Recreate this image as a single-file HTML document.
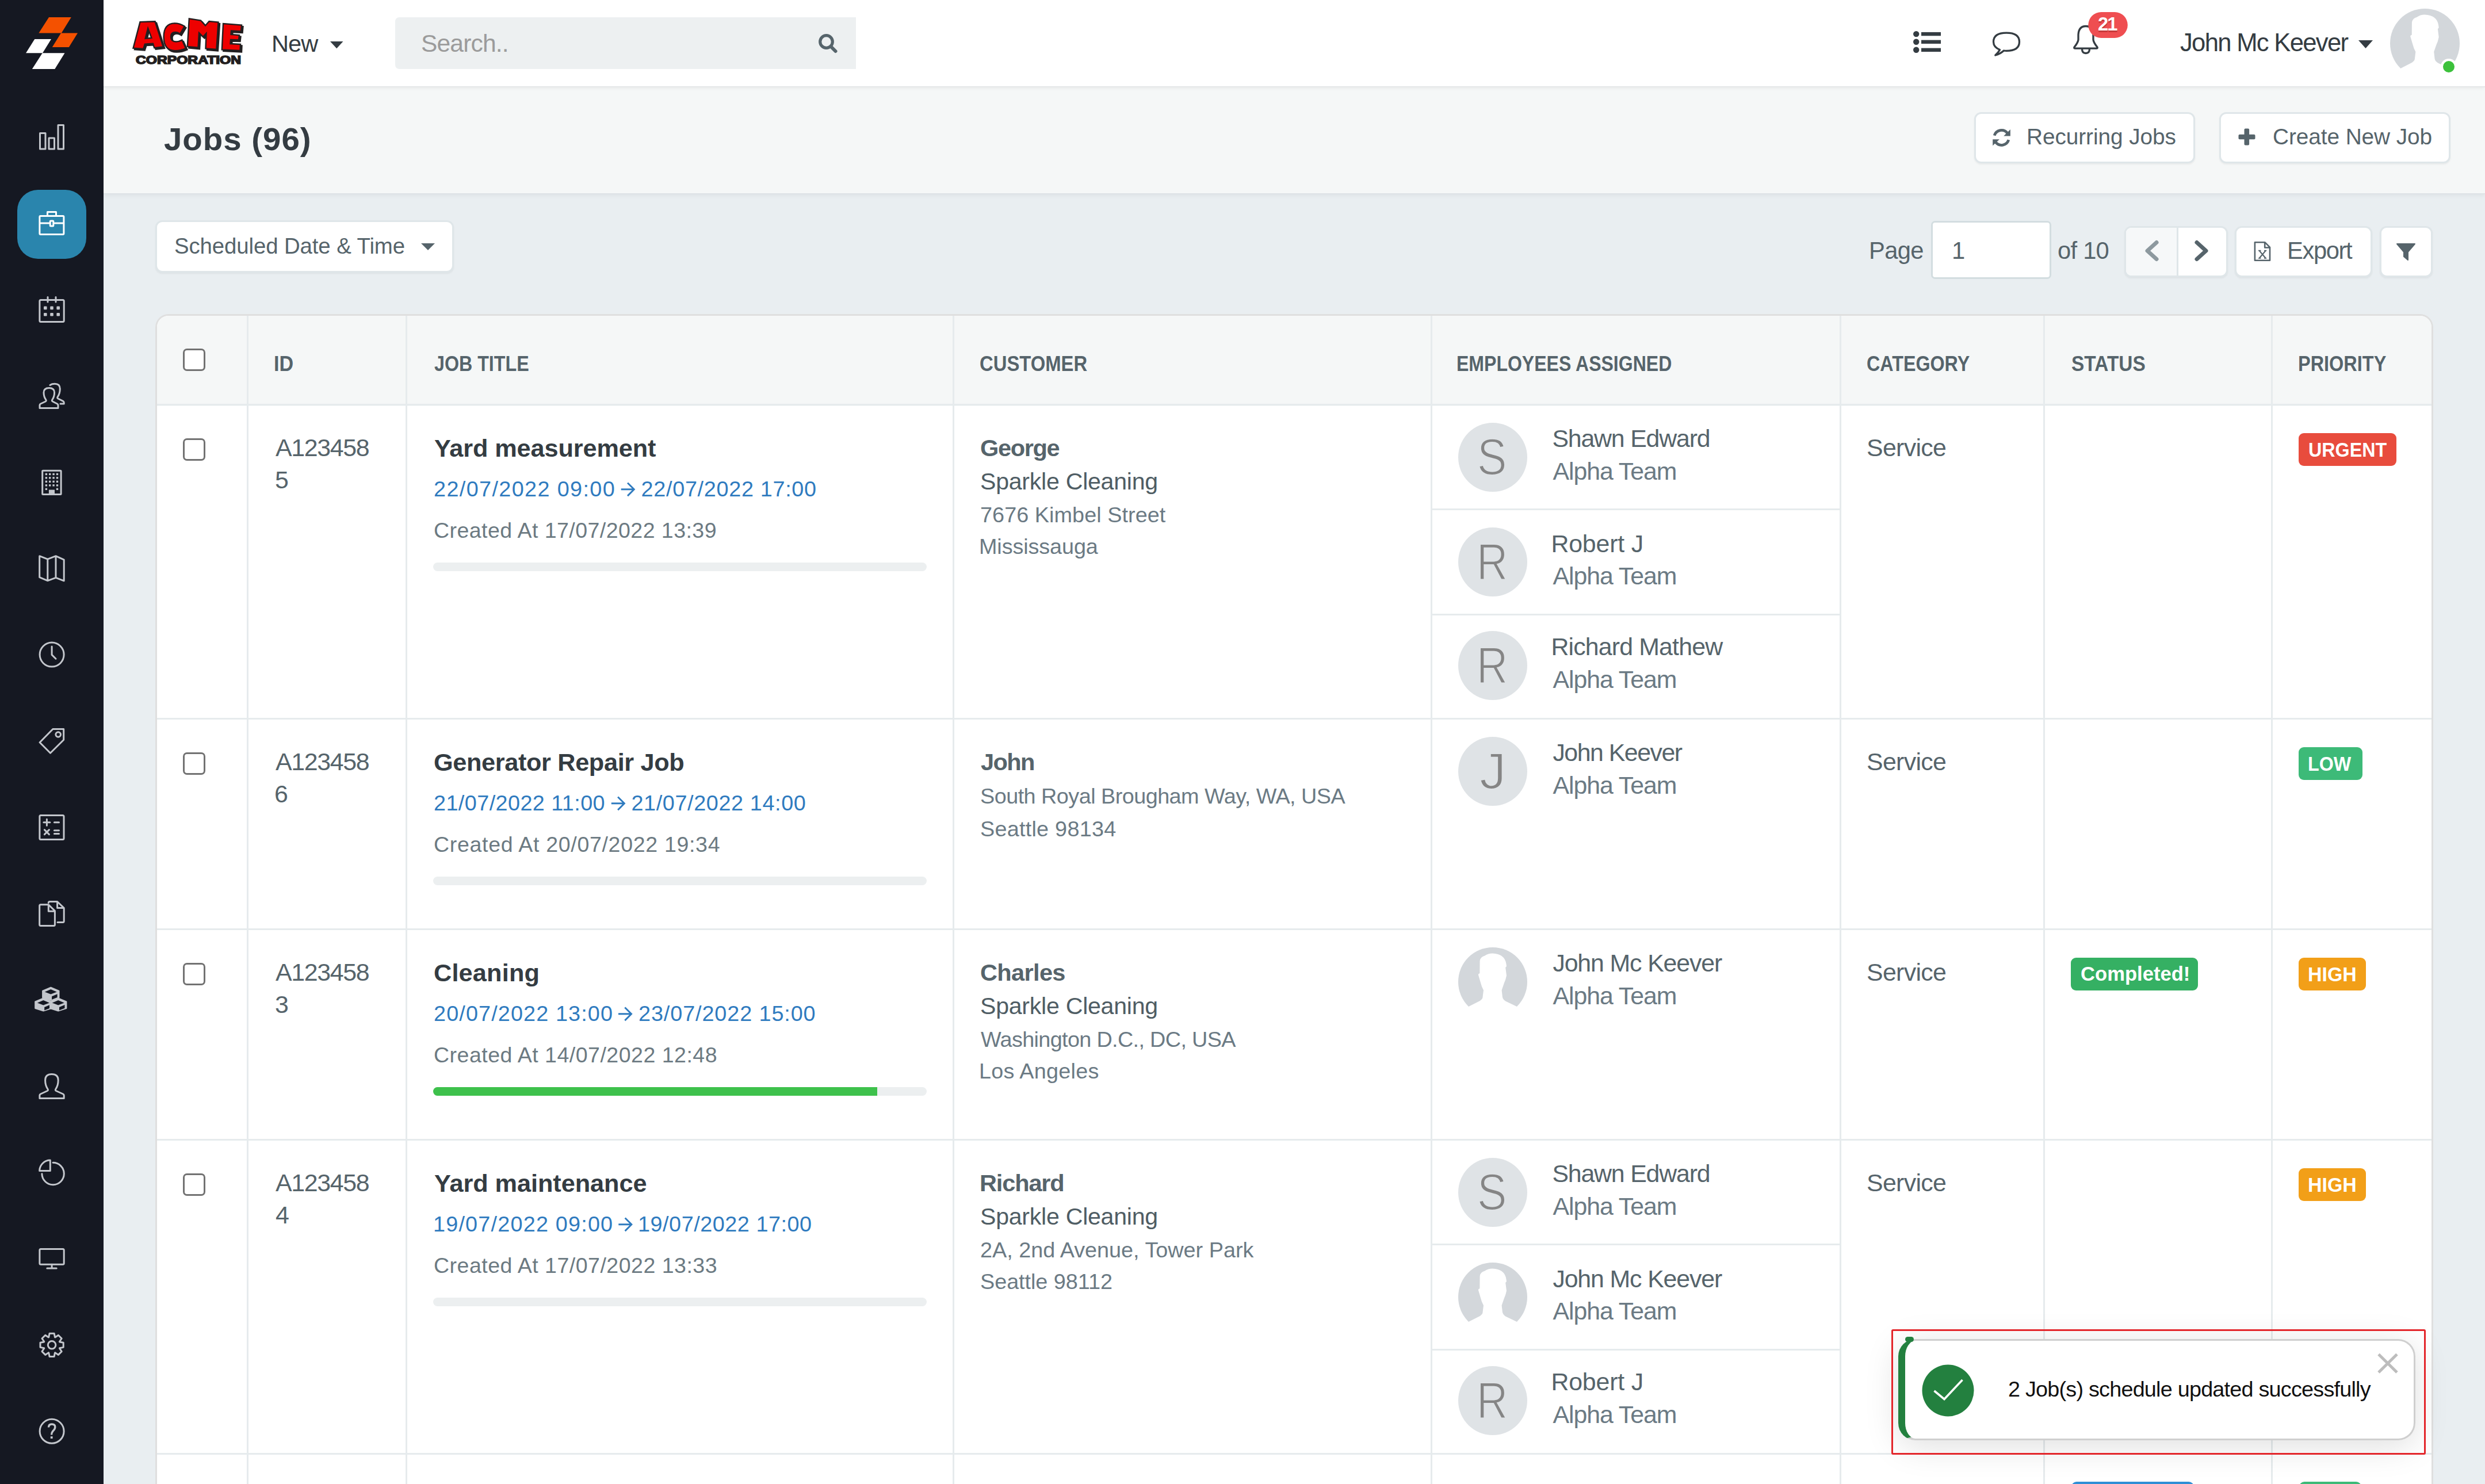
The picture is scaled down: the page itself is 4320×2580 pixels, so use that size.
<!DOCTYPE html>
<html><head><meta charset="utf-8">
<style>
html,body{margin:0;padding:0;}
body{width:4320px;height:2580px;overflow:hidden;position:relative;background:#e9eef1;font-family:"Liberation Sans",sans-serif;}
.a{position:absolute;}
.t{position:absolute;white-space:nowrap;z-index:3;font-family:"Liberation Sans",sans-serif;}
.sb{position:absolute;left:0;top:0;width:180px;height:2580px;background:#151822;}
.ico{position:absolute;left:66px;width:48px;height:48px;}
.hdr{position:absolute;left:180px;top:0;width:4140px;height:150px;background:#fff;box-shadow:0 1.5px 0 #e1e4e5,0 3px 7px rgba(0,0,0,.06);z-index:2;}
.band{position:absolute;left:180px;top:150px;width:4140px;height:186px;background:#f5f7f7;box-shadow:0 1.5px 0 #dce2e5,0 4px 8px rgba(0,0,0,.05);z-index:1;}
.btn{position:absolute;background:#fff;border:3px solid #dfe6e9;border-radius:12px;box-sizing:border-box;box-shadow:0 2px 3px rgba(0,0,0,.05);}
.cb{position:absolute;left:318px;width:39px;height:39px;box-sizing:border-box;border:3px solid #727272;border-radius:7px;background:#fff;}
.vl{position:absolute;width:3px;background:#e6ebed;}
.hl{position:absolute;height:3px;background:#e6ebed;}
.prog{position:absolute;left:753px;width:858px;height:15px;border-radius:8px;background:#eceff0;overflow:hidden;}
.av{position:absolute;left:2535px;width:120px;height:120px;border-radius:60px;background:#dfe3e6;}
.badge{position:absolute;height:57px;border-radius:9px;color:#fff;font-weight:700;}
</style></head>
<body>
<!-- SIDEBAR -->
<div class="sb">
  <svg class="a" style="left:0;top:0" width="180" height="150" viewBox="0 0 180 150">
    <polygon points="85,30 123.8,30 106.8,57.45 67.4,57.45" fill="#f45100"/>
    <polygon points="106,57.45 135,57.45 119.8,82 90.8,82" fill="#f45100"/>
    <polygon points="60.3,68 89,68 74,92.2 45,92.2" fill="#ffffff"/>
    <polygon points="73.7,92.2 112.5,92.2 95.3,120.1 55.9,120.1" fill="#ffffff"/>
  </svg>
  <div class="a" style="left:30px;top:330px;width:120px;height:120px;border-radius:36px;background:#2a85ad;"></div>
  <svg class="a" style="left:0;top:0" width="180" height="2580" viewBox="0 0 180 2580"><rect x="69.5" y="231.5" width="9.5" height="27.5" fill="none" stroke="#c3c6cc" stroke-width="3" stroke-linejoin="round" stroke-linecap="round"/><rect x="85" y="240" width="9.5" height="19" fill="none" stroke="#c3c6cc" stroke-width="3" stroke-linejoin="round" stroke-linecap="round"/><rect x="101" y="217.5" width="9.5" height="41.5" fill="none" stroke="#c3c6cc" stroke-width="3" stroke-linejoin="round" stroke-linecap="round"/><rect x="68.9" y="375.5" width="42" height="32" rx="1.5" fill="none" stroke="#ffffff" stroke-width="3" stroke-linejoin="round"/><path d="M82.5 375.5 V368.5 H97.5 V375.5" fill="none" stroke="#ffffff" stroke-width="3" stroke-linejoin="round"/><path d="M68.9 388 H87 M93 388 H110.9" fill="none" stroke="#ffffff" stroke-width="3" stroke-linejoin="round"/><rect x="87.2" y="384" width="5.6" height="9" rx="1" fill="none" stroke="#ffffff" stroke-width="3" stroke-linejoin="round"/><rect x="68.9" y="521.4" width="42.3" height="38.2" rx="2" fill="none" stroke="#c3c6cc" stroke-width="3" stroke-linejoin="round" stroke-linecap="round"/><path d="M83 516.5 V525 M97 516.5 V525" fill="none" stroke="#c3c6cc" stroke-width="3" stroke-linejoin="round" stroke-linecap="round"/><rect x="76.0" y="532.6" width="5.6" height="5.6" rx="1.2" fill="#c3c6cc"/><rect x="76.0" y="543.9" width="5.6" height="5.6" rx="1.2" fill="#c3c6cc"/><rect x="87.2" y="532.6" width="5.6" height="5.6" rx="1.2" fill="#c3c6cc"/><rect x="87.2" y="543.9" width="5.6" height="5.6" rx="1.2" fill="#c3c6cc"/><rect x="98.4" y="532.6" width="5.6" height="5.6" rx="1.2" fill="#c3c6cc"/><rect x="98.4" y="543.9" width="5.6" height="5.6" rx="1.2" fill="#c3c6cc"/><path d="M69 709.4 H101 V704.5 Q101 702.8 99.4 702 L91.5 698 Q89.6 697 90.8 695 Q94.6 689.5 94.6 682.5 Q94.6 674.5 85.3 674.5 Q76 674.5 76 682.5 Q76 689.5 79.8 695 Q81 697 79.1 698 L70.6 702 Q69 702.8 69 704.5 Z" fill="none" stroke="#c3c6cc" stroke-width="3" stroke-linejoin="round" stroke-linecap="round"/><path d="M87 669.5 Q90 667.3 95.2 667.3 Q104.3 667.3 104.3 676 Q104.3 684 100.2 690 Q99 692 101 693 L109.6 697.3 Q111.2 698.2 111.2 700 V702 H105" fill="none" stroke="#c3c6cc" stroke-width="3" stroke-linejoin="round" stroke-linecap="round"/><rect x="73.7" y="818.3" width="32.4" height="41.1" rx="1" fill="none" stroke="#c3c6cc" stroke-width="3" stroke-linejoin="round" stroke-linecap="round"/><rect x="78.7" y="822.7" width="3.4" height="3.4" fill="#c3c6cc"/><rect x="78.7" y="829.1" width="3.4" height="3.4" fill="#c3c6cc"/><rect x="78.7" y="835.6" width="3.4" height="3.4" fill="#c3c6cc"/><rect x="78.7" y="842.1" width="3.4" height="3.4" fill="#c3c6cc"/><rect x="85.0" y="822.7" width="3.4" height="3.4" fill="#c3c6cc"/><rect x="85.0" y="829.1" width="3.4" height="3.4" fill="#c3c6cc"/><rect x="85.0" y="835.6" width="3.4" height="3.4" fill="#c3c6cc"/><rect x="85.0" y="842.1" width="3.4" height="3.4" fill="#c3c6cc"/><rect x="91.4" y="822.7" width="3.4" height="3.4" fill="#c3c6cc"/><rect x="91.4" y="829.1" width="3.4" height="3.4" fill="#c3c6cc"/><rect x="91.4" y="835.6" width="3.4" height="3.4" fill="#c3c6cc"/><rect x="91.4" y="842.1" width="3.4" height="3.4" fill="#c3c6cc"/><rect x="97.8" y="822.7" width="3.4" height="3.4" fill="#c3c6cc"/><rect x="97.8" y="829.1" width="3.4" height="3.4" fill="#c3c6cc"/><rect x="97.8" y="835.6" width="3.4" height="3.4" fill="#c3c6cc"/><rect x="97.8" y="842.1" width="3.4" height="3.4" fill="#c3c6cc"/><rect x="78.7" y="848.6" width="3.4" height="3.4" fill="#c3c6cc"/><rect x="97.8" y="848.6" width="3.4" height="3.4" fill="#c3c6cc"/><rect x="84.9" y="851.5" width="10.1" height="8.5" fill="#c3c6cc"/><path d="M68.7 966.7 L82.8 972.2 L97 966.7 L111.2 973.2 V1009.8 L97 1004.3 L82.8 1009.6 L68.7 1003.7 Z M82.8 972.2 V1009.6 M97 966.7 V1004.3" fill="none" stroke="#c3c6cc" stroke-width="3" stroke-linejoin="round" stroke-linecap="round"/><circle cx="90.1" cy="1138.1" r="21" fill="none" stroke="#c3c6cc" stroke-width="3" stroke-linejoin="round" stroke-linecap="round"/><path d="M90.1 1124 V1138.4 L97 1145.2" fill="none" stroke="#c3c6cc" stroke-width="3" stroke-linejoin="round" stroke-linecap="round"/><path d="M69.1 1290.8 L91.9 1267.5 H110.7 V1286.3 L87.5 1309.2 Z" fill="none" stroke="#c3c6cc" stroke-width="3" stroke-linejoin="round" stroke-linecap="round"/><circle cx="101.2" cy="1277" r="4.3" fill="none" stroke="#c3c6cc" stroke-width="3" stroke-linejoin="round" stroke-linecap="round"/><rect x="68.9" y="1417.5" width="42.1" height="41.9" rx="2" fill="none" stroke="#c3c6cc" stroke-width="3" stroke-linejoin="round" stroke-linecap="round"/><path d="M75.9 1429.8 H86.9 M81.4 1424.3 V1435.3 M94.4 1429.8 H102.5 M77.4 1442.6 L85.4 1450.6 M85.4 1442.6 L77.4 1450.6 M94.4 1443.8 H102.5 M94.4 1449.4 H102.5" fill="none" stroke="#c3c6cc" stroke-width="3" stroke-linejoin="round" stroke-linecap="round"/><path d="M84.3 1572.8 H70.7 Q68.7 1572.8 68.7 1574.8 V1607.4 Q68.7 1609.4 70.7 1609.4 H93.4 Q95.4 1609.4 95.4 1607.4 V1583.5 L84.3 1572.8 V1584.3 H95.4" fill="none" stroke="#c3c6cc" stroke-width="3" stroke-linejoin="round" stroke-linecap="round"/><path d="M84.3 1569.5 Q84.3 1567.5 86.3 1567.5 H99.6 L111.2 1578.6 V1601.5 Q111.2 1603.5 109.2 1603.5 H100 M99.6 1567.5 V1578.6 H111.2" fill="none" stroke="#c3c6cc" stroke-width="3" stroke-linejoin="round" stroke-linecap="round"/><polygon points="88.3,1716.7 102.5,1722.6 102.5,1734.3 88.3,1738.7 74.1,1734.3 74.1,1722.6" fill="#c3c6cc" stroke="#c3c6cc" stroke-width="2" stroke-linejoin="round"/><polygon points="88.3,1720.1 98.8,1724.6 88.3,1728.6 77.8,1724.6" fill="#141722"/><polygon points="90.1,1732.3 99.6,1728.2 99.6,1733.9 90.1,1737.7" fill="#141722"/><polygon points="75.4,1735.5 89.6,1741.4 89.6,1753.1 75.4,1757.5 61.2,1753.1 61.2,1741.4" fill="#c3c6cc" stroke="#c3c6cc" stroke-width="2" stroke-linejoin="round"/><polygon points="75.4,1738.9 85.9,1743.4 75.4,1747.4 64.9,1743.4" fill="#141722"/><polygon points="77.2,1751.1 86.7,1747.0 86.7,1752.7 77.2,1756.5" fill="#141722"/><polygon points="101.2,1735.5 115.4,1741.4 115.4,1753.1 101.2,1757.5 87.0,1753.1 87.0,1741.4" fill="#c3c6cc" stroke="#c3c6cc" stroke-width="2" stroke-linejoin="round"/><polygon points="101.2,1738.9 111.7,1743.4 101.2,1747.4 90.7,1743.4" fill="#141722"/><polygon points="103.0,1751.1 112.5,1747.0 112.5,1752.7 103.0,1756.5" fill="#141722"/><path d="M68.9 1909.4 H111.2 V1904.5 Q111.2 1902.9 109.6 1902 L97.5 1896.5 Q95.6 1895.5 96.8 1893.5 Q101.2 1887 101.2 1878 Q101.2 1867.5 89.9 1867.5 Q78.6 1867.5 78.6 1878 Q78.6 1887 83 1893.5 Q84.2 1895.5 82.3 1896.5 L70.5 1902 Q68.9 1902.9 68.9 1904.5 Z" fill="none" stroke="#c3c6cc" stroke-width="3" stroke-linejoin="round" stroke-linecap="round"/><path d="M92 2021.3 A19.2 19.2 0 1 1 72.9 2040.8" fill="none" stroke="#c3c6cc" stroke-width="3" stroke-linejoin="round" stroke-linecap="round"/><path d="M87.3 2017.1 V2035.5 H68.7 A18.6 18.6 0 0 1 87.3 2017.1 Z" fill="none" stroke="#c3c6cc" stroke-width="3" stroke-linejoin="round" stroke-linecap="round"/><rect x="68.9" y="2171.5" width="42.3" height="26.7" rx="2" fill="none" stroke="#c3c6cc" stroke-width="3" stroke-linejoin="round" stroke-linecap="round"/><path d="M90.1 2198.2 V2205.1 M81.8 2205.1 H98.2" fill="none" stroke="#c3c6cc" stroke-width="3" stroke-linejoin="round" stroke-linecap="round"/><polygon points="86.03,2318.21 94.17,2318.21 95.48,2324.83 95.82,2324.98 101.43,2321.21 107.19,2326.97 103.42,2332.58 103.57,2332.92 110.19,2334.23 110.19,2342.37 103.57,2343.68 103.42,2344.02 107.19,2349.63 101.43,2355.39 95.82,2351.62 95.48,2351.77 94.17,2358.39 86.03,2358.39 84.72,2351.77 84.38,2351.62 78.77,2355.39 73.01,2349.63 76.78,2344.02 76.63,2343.68 70.01,2342.37 70.01,2334.23 76.63,2332.92 76.78,2332.58 73.01,2326.97 78.77,2321.21 84.38,2324.98 84.72,2324.83" fill="none" stroke="#c3c6cc" stroke-width="3" stroke-linejoin="round" stroke-linecap="round"/><circle cx="90.1" cy="2338.3" r="6.8" fill="none" stroke="#c3c6cc" stroke-width="3" stroke-linejoin="round" stroke-linecap="round"/><circle cx="90.1" cy="2488.3" r="21" fill="none" stroke="#c3c6cc" stroke-width="3" stroke-linejoin="round" stroke-linecap="round"/><path d="M84.5 2481.5 Q84.5 2476 90.1 2476 Q95.8 2476 95.8 2481 Q95.8 2484.5 92 2488 Q89.6 2490.5 89.6 2494.5" fill="none" stroke="#c3c6cc" stroke-width="3.4"/><rect x="87.8" y="2497.2" width="3.8" height="3.8" fill="#c3c6cc"/></svg>
</div>
<!-- HEADER -->
<div class="hdr"></div>
<div class="band"></div>
<svg class="a" style="left:0;top:0;z-index:3" width="1200" height="2580" viewBox="0 0 1200 2580"><path d="M1079.7 850.8 H1102.7 M1091.0 839.5 L1102.3 850.8 L1091.0 862.1" fill="none" stroke="#2f7bbf" stroke-width="2.9"/><path d="M1062.8 1396.8 H1085.8 M1074.1 1385.5 L1085.4 1396.8 L1074.1 1408.1" fill="none" stroke="#2f7bbf" stroke-width="2.9"/><path d="M1075.0 1762.8 H1098.0 M1086.3 1751.5 L1097.6 1762.8 L1086.3 1774.1" fill="none" stroke="#2f7bbf" stroke-width="2.9"/><path d="M1075.3 2128.8 H1098.3 M1086.6 2117.5 L1097.9 2128.8 L1086.6 2140.1" fill="none" stroke="#2f7bbf" stroke-width="2.9"/></svg><svg class="a" style="left:0;top:0;z-index:3" width="460" height="150" viewBox="0 0 460 150"><g transform="translate(2.5,2.5)" fill="#231f20" stroke="#231f20" stroke-width="2.4" stroke-linejoin="miter"><path fill-rule="evenodd" d="M231.5,83.7 L243.5,38.1 L269.6,37.3 L283.7,81.5 L268.2,83.3 L266,75.8 L251.9,76.6 L249.2,85 Z M257.2,49.2 L263.4,66 L252.7,66.9 Z"/><path d="M320.9 45.7 Q312 40.4 303.5 40.4 Q284.6 41 284.6 64 Q284.6 88.1 304.5 88.1 Q314 88.1 323 84 L316.5 69.6 Q311 72.5 306 72.5 Q297 72.5 297 64 Q297 56 305 56 Q309 56 313 59 Z"/><polygon points="325.8,81 328.8,32.4 349,35.5 357,44.5 363.5,37 379.5,38.6 376.4,86 357.5,84.5 358.5,58 353,64 346,57 344.5,82.8"/><polygon points="385.8,86.4 388,41 420,43.5 419,54.5 402,53.5 401.5,60 416,61 415,69.5 401,69 400.5,76 418,77 417.5,88"/></g><g transform="translate(0.0,0.0)" fill="#ee0000" stroke="#231f20" stroke-width="2.4" stroke-linejoin="miter"><path fill-rule="evenodd" d="M231.5,83.7 L243.5,38.1 L269.6,37.3 L283.7,81.5 L268.2,83.3 L266,75.8 L251.9,76.6 L249.2,85 Z M257.2,49.2 L263.4,66 L252.7,66.9 Z"/><path d="M320.9 45.7 Q312 40.4 303.5 40.4 Q284.6 41 284.6 64 Q284.6 88.1 304.5 88.1 Q314 88.1 323 84 L316.5 69.6 Q311 72.5 306 72.5 Q297 72.5 297 64 Q297 56 305 56 Q309 56 313 59 Z"/><polygon points="325.8,81 328.8,32.4 349,35.5 357,44.5 363.5,37 379.5,38.6 376.4,86 357.5,84.5 358.5,58 353,64 346,57 344.5,82.8"/><polygon points="385.8,86.4 388,41 420,43.5 419,54.5 402,53.5 401.5,60 416,61 415,69.5 401,69 400.5,76 418,77 417.5,88"/></g><text x="236" y="111" font-family="Liberation Sans" font-weight="700" font-size="19.5" fill="#231f20" stroke="#231f20" stroke-width="1.6" textLength="183" lengthAdjust="spacingAndGlyphs">CORPORATION</text></svg><svg class="a" style="left:0;top:0;z-index:3" width="4320" height="150" viewBox="0 0 4320 150"><polygon points="574,72 596.5,72 585.25,84.2" fill="#343c42"/><path d="M687 38 Q687 30 695 30 H1488 V120 H695 Q687 120 687 112 Z" fill="#edf0f1"/><circle cx="1436.5" cy="72.5" r="10.8" fill="none" stroke="#56646b" stroke-width="5.2"/><path d="M1445 81.5 L1452.5 89" stroke="#56646b" stroke-width="6" stroke-linecap="round"/><circle cx="3331.2" cy="59.1" r="5.2" fill="#343c42"/><circle cx="3331.2" cy="72.8" r="5.2" fill="#343c42"/><circle cx="3331.2" cy="86.8" r="5.2" fill="#343c42"/><rect x="3340" y="55.9" width="34" height="6.4" fill="#343c42"/><rect x="3340" y="69.6" width="34" height="6.4" fill="#343c42"/><rect x="3340" y="83.6" width="34" height="6.4" fill="#343c42"/><path d="M3476.5 86.5 Q3465.5 82 3465.5 72.8 Q3465.5 57.2 3488 57.2 Q3510.5 57.2 3510.5 72.8 Q3510.5 88.4 3488 88.4 Q3485 88.4 3483.5 88 Q3477 94 3468.8 96 Q3474 91.5 3476.5 86.5 Z" fill="none" stroke="#343c42" stroke-width="3.3" stroke-linejoin="round"/><path d="M3626 45.5 Q3614 45.5 3613 60 V69 Q3612.5 74 3606 82 Q3605 84.2 3607.5 84.2 H3644.5 Q3647 84.2 3646 82 Q3639.5 74 3639 69 V60 Q3638 45.5 3626 45.5 Z" fill="none" stroke="#343c42" stroke-width="3.3" stroke-linejoin="round"/><path d="M3619.5 85 Q3619.5 92.5 3626 92.5 Q3632.5 92.5 3632.5 85" fill="none" stroke="#343c42" stroke-width="3.3"/><rect x="3630.3" y="21" width="68.5" height="45" rx="22.5" fill="#ef4e51"/><polygon points="4100,70 4125,70 4112.5,84" fill="#343c42"/></svg><svg class="a" style="left:4155.0px;top:15.0px;z-index:3" width="121" height="121" viewBox="0 0 120 120"><circle cx="60" cy="60" r="60" fill="#d3d7db"/><path d="M18.5,102.8 L37.8,92.9 Q42.5,89.5 42.5,86.8 L44,74.5 Q40.5,68 39.2,62.2 L35,48.1 Q34.6,45.5 37.4,45.3 L37.6,24 Q38,17 46.3,14.6 Q52,10.4 59.5,10.4 Q81,11 83.5,29 L84,33 L82.2,35 L84,49 Q82.5,57 79.8,62.2 L75.6,74.5 L77,86.8 Q78,91 82.2,93.4 L101.5,102.8 L124,124 L-4,124 Z" fill="#ffffff"/></svg><div class="a" style="left:4243px;top:102px;width:28px;height:28px;border-radius:14px;background:#3cc13b;border:4px solid #fff;box-sizing:border-box;z-index:4;"></div><div class="btn" style="left:3432px;top:195px;width:384px;height:89px;z-index:3;"></div><div class="btn" style="left:3858px;top:195px;width:402px;height:89px;z-index:3;"></div><svg class="a" style="left:3455px;top:215px;z-index:4" width="50" height="50" viewBox="3455 215 50 50"><path d="M3467.16 235.63 A12.9 12.9 0 0 1 3489.67 231.46" fill="none" stroke="#56646b" stroke-width="4.8"/><polygon points="3494.9,224.9 3494.9,236.6 3483.2,236.6" fill="#56646b"/><path d="M3491.84 243.17 A12.9 12.9 0 0 1 3469.33 247.34" fill="none" stroke="#56646b" stroke-width="4.8"/><polygon points="3464.2,242.2 3464.2,253.2 3475.9,242.2" fill="#56646b"/></svg><svg class="a" style="left:3890px;top:222px;z-index:4" width="32" height="32" viewBox="0 0 32 32"><rect x="11.5" y="1.5" width="8.6" height="29" rx="2" fill="#56646b"/><rect x="1.5" y="11.7" width="29" height="8.6" rx="2" fill="#56646b"/></svg><div class="btn" style="left:270px;top:383px;width:519px;height:91px;"></div><svg class="a" style="left:720px;top:415px" width="50" height="30" viewBox="720 415 50 30"><polygon points="732,423 756,423 744,435" fill="#56646b"/></svg><div class="a" style="left:3357px;top:384px;width:209px;height:101px;box-sizing:border-box;border:3px solid #d3dde0;border-radius:7px;background:#fff;"></div><div class="btn" style="left:3693px;top:393px;width:180px;height:89px;overflow:hidden;"><div class="a" style="left:0;top:0;width:91px;height:89px;background:#f6f8f9;"></div><div class="a" style="left:88px;top:0;width:3px;height:89px;background:#dfe6e9;"></div></div><div class="btn" style="left:3885px;top:393px;width:239px;height:89px;"></div><div class="btn" style="left:4137px;top:393px;width:92px;height:89px;"></div><svg class="a" style="left:3700px;top:400px" width="540" height="80" viewBox="3700 400 540 80"><path d="M3749 421.5 L3733 436 L3749 450.5" fill="none" stroke="#8d999f" stroke-width="7" stroke-linecap="round" stroke-linejoin="round"/><path d="M3819 421.5 L3835 436 L3819 450.5" fill="none" stroke="#56646b" stroke-width="7" stroke-linecap="round" stroke-linejoin="round"/><path d="M3919.9 421.3 H3937.5 L3946 429.8 V452.7 H3919.9 Z M3937.2 421.3 V430.5 H3946" fill="none" stroke="#56646b" stroke-width="2.6" stroke-linejoin="round"/><path d="M3927.5 435.6 L3938.8 449 M3938.8 435.6 L3927.5 449" stroke="#56646b" stroke-width="2.2"/><path d="M3926 435.6 H3930.5 M3936 435.6 H3940.3 M3926 449 H3930.5 M3936 449 H3940.3" stroke="#56646b" stroke-width="1.6"/><path d="M4167 424 H4198 L4186 438 V452 L4179 446 V438 Z" fill="#56646b" stroke="#56646b" stroke-width="2" stroke-linejoin="round"/></svg><div class="a" style="left:270px;top:546px;width:3960px;height:2100px;background:#fff;border:3px solid #dfdfdf;border-radius:23px;box-sizing:border-box;overflow:hidden;"><div class="a" style="left:0;top:0;width:3960px;height:157px;background:#f5f7f7;"></div></div><div class="vl" style="left:428.5px;top:549px;height:2040px;"></div><div class="vl" style="left:704.5px;top:549px;height:2040px;"></div><div class="vl" style="left:1655.5px;top:549px;height:2040px;"></div><div class="vl" style="left:2486.5px;top:549px;height:2040px;"></div><div class="vl" style="left:3197.5px;top:549px;height:2040px;"></div><div class="vl" style="left:3551.5px;top:549px;height:2040px;"></div><div class="vl" style="left:3947.5px;top:549px;height:2040px;"></div><div class="hl" style="left:273px;top:701.5px;width:3954px;"></div><div class="hl" style="left:273px;top:1247.5px;width:3954px;"></div><div class="hl" style="left:273px;top:1613.5px;width:3954px;"></div><div class="hl" style="left:273px;top:1979.5px;width:3954px;"></div><div class="hl" style="left:273px;top:2525.5px;width:3954px;"></div><div class="hl" style="left:2489px;top:884.2px;width:709px;"></div><div class="hl" style="left:2489px;top:1067.2px;width:709px;"></div><div class="hl" style="left:2489px;top:2162.2px;width:709px;"></div><div class="hl" style="left:2489px;top:2345.2px;width:709px;"></div><div class="cb" style="top:606px;"></div><div class="cb" style="top:762px;"></div><div class="prog" style="top:978px;"></div><div class="av" style="top:735.2px;"></div><div class="av" style="top:917.4px;"></div><div class="av" style="top:1097.2px;"></div><div class="badge" style="left:3996px;top:753px;width:170px;background:#e84c3d;"></div><div class="cb" style="top:1308px;"></div><div class="prog" style="top:1524px;"></div><div class="av" style="top:1281.2px;"></div><div class="badge" style="left:3996px;top:1299px;width:111px;background:#3dba78;"></div><div class="cb" style="top:1674px;"></div><div class="prog" style="top:1890px;"><div class="a" style="left:0;top:0;height:15px;width:772px;background:#3ec14c;"></div></div><svg class="a" style="left:2535.0px;top:1647.2px;z-index:3" width="120" height="120" viewBox="0 0 120 120"><circle cx="60" cy="60" r="60" fill="#d3d7db"/><path d="M18.5,102.8 L37.8,92.9 Q42.5,89.5 42.5,86.8 L44,74.5 Q40.5,68 39.2,62.2 L35,48.1 Q34.6,45.5 37.4,45.3 L37.6,24 Q38,17 46.3,14.6 Q52,10.4 59.5,10.4 Q81,11 83.5,29 L84,33 L82.2,35 L84,49 Q82.5,57 79.8,62.2 L75.6,74.5 L77,86.8 Q78,91 82.2,93.4 L101.5,102.8 L124,124 L-4,124 Z" fill="#ffffff"/></svg><div class="badge" style="left:3600px;top:1665px;width:221px;background:#35b063;"></div><div class="badge" style="left:3996px;top:1665px;width:117px;background:#f29f18;"></div><div class="cb" style="top:2040px;"></div><div class="prog" style="top:2256px;"></div><div class="av" style="top:2013.2px;"></div><svg class="a" style="left:2535.0px;top:2195.4px;z-index:3" width="120" height="120" viewBox="0 0 120 120"><circle cx="60" cy="60" r="60" fill="#d3d7db"/><path d="M18.5,102.8 L37.8,92.9 Q42.5,89.5 42.5,86.8 L44,74.5 Q40.5,68 39.2,62.2 L35,48.1 Q34.6,45.5 37.4,45.3 L37.6,24 Q38,17 46.3,14.6 Q52,10.4 59.5,10.4 Q81,11 83.5,29 L84,33 L82.2,35 L84,49 Q82.5,57 79.8,62.2 L75.6,74.5 L77,86.8 Q78,91 82.2,93.4 L101.5,102.8 L124,124 L-4,124 Z" fill="#ffffff"/></svg><div class="av" style="top:2375.2px;"></div><div class="badge" style="left:3996px;top:2031px;width:117px;background:#f29f18;"></div><div class="badge" style="left:3601px;top:2576px;width:213px;background:#2f8fd6;"></div><div class="badge" style="left:3997px;top:2576px;width:108px;background:#3dba78;"></div><div class="a" style="left:3300px;top:2328px;width:899px;height:176px;border-radius:30px;box-shadow:0 10px 60px rgba(0,0,0,.13);z-index:5;"></div><div class="a" style="left:3287.5px;top:2311px;width:929px;height:218px;box-sizing:border-box;border:3.5px solid #e3262b;border-radius:3px;z-index:6;"></div><div class="a" style="left:3300px;top:2328px;width:899px;height:176px;box-sizing:border-box;border:3px solid #cfcfcf;border-left:12px solid #23803f;border-radius:30px;background:#fff;z-index:6;"></div><div class="a" style="left:3312px;top:2324px;width:15px;height:9px;border-radius:5px;background:#23803f;z-index:7;"></div><svg class="a" style="left:3330px;top:2350px;z-index:7" width="880" height="140" viewBox="3330 2350 880 140"><circle cx="3386.5" cy="2417.5" r="45" fill="#23803f"/><path d="M3362.5 2418 L3380 2432.5 L3411.5 2399" fill="none" stroke="#fff" stroke-width="3.6"/><path d="M4135 2354.5 L4167 2386 M4167 2354.5 L4135 2386" stroke="#bdbdbd" stroke-width="5"/></svg>
<div class="t" id="t0" style="left:472.0px;top:55.1px;font-size:41.57px;line-height:41.57px;color:#343c42;letter-spacing:-1.00px;">New</div>
<div class="t" id="t1" style="left:732.0px;top:54.4px;font-size:42.59px;line-height:42.59px;color:#9b9b9b;letter-spacing:-0.86px;">Search..</div>
<div class="t" id="t2" style="left:3790.0px;top:53.1px;font-size:43.60px;line-height:43.60px;color:#343c42;letter-spacing:-1.69px;">John Mc Keever</div>
<div class="t" id="t3" style="left:3647.0px;top:26.1px;font-size:32.70px;line-height:32.70px;color:#ffffff;font-weight:700;letter-spacing:-2.00px;text-shadow:0 3px 0 rgba(150,30,30,.45);">21</div>
<div class="t" id="t4" style="left:285.0px;top:213.5px;font-size:56.40px;line-height:56.40px;color:#343c42;font-weight:700;letter-spacing:1.00px;">Jobs (96)</div>
<div class="t" id="t5" style="left:3523.0px;top:219.3px;font-size:38.81px;line-height:38.81px;color:#56646b;letter-spacing:-0.08px;">Recurring Jobs</div>
<div class="t" id="t6" style="left:3951.0px;top:219.3px;font-size:38.81px;line-height:38.81px;color:#56646b;letter-spacing:-0.08px;">Create New Job</div>
<div class="t" id="t7" style="left:303.0px;top:409.0px;font-size:38.37px;line-height:38.37px;color:#56646b;letter-spacing:-0.10px;">Scheduled Date &amp; Time</div>
<div class="t" id="t8" style="left:3249.0px;top:415.4px;font-size:41.72px;line-height:41.72px;color:#56646b;letter-spacing:-0.67px;">Page</div>
<div class="t" id="t9" style="left:3393.0px;top:415.4px;font-size:41.72px;line-height:41.72px;color:#56646b;">1</div>
<div class="t" id="t10" style="left:3577.0px;top:415.4px;font-size:41.72px;line-height:41.72px;color:#56646b;letter-spacing:-0.75px;">of 10</div>
<div class="t" id="t11" style="left:3976.0px;top:415.4px;font-size:41.72px;line-height:41.72px;color:#56646b;letter-spacing:-1.40px;">Export</div>
<div class="t" id="t12" style="left:476.0px;top:614.7px;font-size:36.34px;line-height:36.34px;color:#56646b;font-weight:700;transform:scaleX(0.9394);transform-origin:0 0;">ID</div>
<div class="t" id="t13" style="left:755.0px;top:614.7px;font-size:36.34px;line-height:36.34px;color:#56646b;font-weight:700;transform:scaleX(0.8865);transform-origin:0 0;">JOB TITLE</div>
<div class="t" id="t14" style="left:1703.4px;top:614.7px;font-size:36.34px;line-height:36.34px;color:#56646b;font-weight:700;transform:scaleX(0.9029);transform-origin:0 0;">CUSTOMER</div>
<div class="t" id="t15" style="left:2532.0px;top:614.7px;font-size:36.34px;line-height:36.34px;color:#56646b;font-weight:700;transform:scaleX(0.8815);transform-origin:0 0;">EMPLOYEES ASSIGNED</div>
<div class="t" id="t16" style="left:3245.0px;top:614.7px;font-size:36.34px;line-height:36.34px;color:#56646b;font-weight:700;transform:scaleX(0.8881);transform-origin:0 0;">CATEGORY</div>
<div class="t" id="t17" style="left:3601.0px;top:614.7px;font-size:36.34px;line-height:36.34px;color:#56646b;font-weight:700;transform:scaleX(0.9203);transform-origin:0 0;">STATUS</div>
<div class="t" id="t18" style="left:3995.0px;top:614.7px;font-size:36.34px;line-height:36.34px;color:#56646b;font-weight:700;transform:scaleX(0.8935);transform-origin:0 0;">PRIORITY</div>
<div class="t" id="t19" style="left:479.0px;top:756.7px;font-size:42.88px;line-height:42.88px;color:#56646b;letter-spacing:-1.33px;">A123458</div>
<div class="t" id="t20" style="left:478.0px;top:812.7px;font-size:42.88px;line-height:42.88px;color:#56646b;">5</div>
<div class="t" id="t21" style="left:755.0px;top:758.3px;font-size:43.31px;line-height:43.31px;color:#343c42;font-weight:700;letter-spacing:-0.13px;">Yard measurement</div>
<div class="t" id="t22" style="left:754.0px;top:832.0px;font-size:37.79px;line-height:37.79px;color:#2f7bbf;letter-spacing:1.37px;">22/07/2022 09:00</div>
<div class="t" id="t23" style="left:1114.6px;top:832.0px;font-size:37.79px;line-height:37.79px;color:#2f7bbf;letter-spacing:0.69px;">22/07/2022 17:00</div>
<div class="t" id="t24" style="left:754.0px;top:903.8px;font-size:37.50px;line-height:37.50px;color:#6c7a82;letter-spacing:0.46px;">Created At 17/07/2022 13:39</div>
<div class="t" id="t25" style="left:1704.0px;top:757.8px;font-size:41.57px;line-height:41.57px;color:#56646b;font-weight:700;letter-spacing:-1.40px;">George</div>
<div class="t" id="t26" style="left:1704.0px;top:816.8px;font-size:41.13px;line-height:41.13px;color:#4f5d64;letter-spacing:-0.27px;">Sparkle Cleaning</div>
<div class="t" id="t27" style="left:1704.0px;top:877.0px;font-size:37.79px;line-height:37.79px;color:#6b7a84;letter-spacing:0.06px;">7676 Kimbel Street</div>
<div class="t" id="t28" style="left:1702.0px;top:932.0px;font-size:37.79px;line-height:37.79px;color:#6b7a84;letter-spacing:-0.10px;">Mississauga</div>
<div class="t" id="t29" style="left:2698.4px;top:741.3px;font-size:42.88px;line-height:42.88px;color:#56646b;letter-spacing:-1.20px;">Shawn Edward</div>
<div class="t" id="t30" style="left:2699.4px;top:798.2px;font-size:42.88px;line-height:42.88px;color:#6b7a84;letter-spacing:-1.06px;">Alpha Team</div>
<div class="t" id="t31" style="left:2568.0px;top:750.7px;font-size:88.66px;line-height:88.66px;color:#858585;transform:scaleX(0.8697);transform-origin:0 0;-webkit-text-stroke:2px #dfe3e6;">S</div>
<div class="t" id="t32" style="left:2696.4px;top:923.5px;font-size:42.88px;line-height:42.88px;color:#56646b;letter-spacing:-0.17px;">Robert J</div>
<div class="t" id="t33" style="left:2699.4px;top:980.4px;font-size:42.88px;line-height:42.88px;color:#6b7a84;letter-spacing:-1.06px;">Alpha Team</div>
<div class="t" id="t34" style="left:2567.0px;top:932.9px;font-size:88.66px;line-height:88.66px;color:#858585;transform:scaleX(0.8482);transform-origin:0 0;-webkit-text-stroke:2px #dfe3e6;">R</div>
<div class="t" id="t35" style="left:2696.4px;top:1103.3px;font-size:42.88px;line-height:42.88px;color:#56646b;letter-spacing:-0.85px;">Richard Mathew</div>
<div class="t" id="t36" style="left:2699.4px;top:1160.2px;font-size:42.88px;line-height:42.88px;color:#6b7a84;letter-spacing:-1.06px;">Alpha Team</div>
<div class="t" id="t37" style="left:2567.0px;top:1112.7px;font-size:88.66px;line-height:88.66px;color:#858585;transform:scaleX(0.8482);transform-origin:0 0;-webkit-text-stroke:2px #dfe3e6;">R</div>
<div class="t" id="t38" style="left:3245.0px;top:756.7px;font-size:42.88px;line-height:42.88px;color:#56646b;letter-spacing:-0.67px;">Service</div>
<div class="t" id="t39" style="left:4013.0px;top:764.9px;font-size:34.59px;line-height:34.59px;color:#ffffff;font-weight:700;transform:scaleX(0.9328);transform-origin:0 0;">URGENT</div>
<div class="t" id="t40" style="left:479.0px;top:1302.7px;font-size:42.88px;line-height:42.88px;color:#56646b;letter-spacing:-1.33px;">A123458</div>
<div class="t" id="t41" style="left:477.0px;top:1358.7px;font-size:42.88px;line-height:42.88px;color:#56646b;">6</div>
<div class="t" id="t42" style="left:754.0px;top:1304.3px;font-size:43.31px;line-height:43.31px;color:#343c42;font-weight:700;letter-spacing:-0.37px;">Generator Repair Job</div>
<div class="t" id="t43" style="left:754.0px;top:1378.0px;font-size:37.79px;line-height:37.79px;color:#2f7bbf;letter-spacing:0.42px;">21/07/2022 11:00</div>
<div class="t" id="t44" style="left:1097.4px;top:1378.0px;font-size:37.79px;line-height:37.79px;color:#2f7bbf;letter-spacing:0.62px;">21/07/2022 14:00</div>
<div class="t" id="t45" style="left:754.0px;top:1449.8px;font-size:37.50px;line-height:37.50px;color:#6c7a82;letter-spacing:0.69px;">Created At 20/07/2022 19:34</div>
<div class="t" id="t46" style="left:1705.0px;top:1303.8px;font-size:41.57px;line-height:41.57px;color:#56646b;font-weight:700;letter-spacing:-1.67px;">John</div>
<div class="t" id="t47" style="left:1704.0px;top:1365.6px;font-size:37.79px;line-height:37.79px;color:#6b7a84;letter-spacing:-0.53px;">South Royal Brougham Way, WA, USA</div>
<div class="t" id="t48" style="left:1704.0px;top:1423.0px;font-size:37.79px;line-height:37.79px;color:#6b7a84;letter-spacing:0.25px;">Seattle 98134</div>
<div class="t" id="t49" style="left:2699.4px;top:1287.3px;font-size:42.88px;line-height:42.88px;color:#56646b;letter-spacing:-1.50px;">John Keever</div>
<div class="t" id="t50" style="left:2699.4px;top:1344.2px;font-size:42.88px;line-height:42.88px;color:#6b7a84;letter-spacing:-1.06px;">Alpha Team</div>
<div class="t" id="t51" style="left:2572.0px;top:1296.7px;font-size:88.66px;line-height:88.66px;color:#858585;transform:scaleX(1.0532);transform-origin:0 0;-webkit-text-stroke:2px #dfe3e6;">J</div>
<div class="t" id="t52" style="left:3245.0px;top:1302.7px;font-size:42.88px;line-height:42.88px;color:#56646b;letter-spacing:-0.67px;">Service</div>
<div class="t" id="t53" style="left:4012.0px;top:1310.9px;font-size:34.59px;line-height:34.59px;color:#ffffff;font-weight:700;transform:scaleX(0.9313);transform-origin:0 0;">LOW</div>
<div class="t" id="t54" style="left:479.0px;top:1668.7px;font-size:42.88px;line-height:42.88px;color:#56646b;letter-spacing:-1.33px;">A123458</div>
<div class="t" id="t55" style="left:478.0px;top:1724.7px;font-size:42.88px;line-height:42.88px;color:#56646b;">3</div>
<div class="t" id="t56" style="left:754.0px;top:1670.3px;font-size:43.31px;line-height:43.31px;color:#343c42;font-weight:700;letter-spacing:0.16px;">Cleaning</div>
<div class="t" id="t57" style="left:754.0px;top:1744.0px;font-size:37.79px;line-height:37.79px;color:#2f7bbf;letter-spacing:1.12px;">20/07/2022 13:00</div>
<div class="t" id="t58" style="left:1110.0px;top:1744.0px;font-size:37.79px;line-height:37.79px;color:#2f7bbf;letter-spacing:0.90px;">23/07/2022 15:00</div>
<div class="t" id="t59" style="left:754.0px;top:1815.8px;font-size:37.50px;line-height:37.50px;color:#6c7a82;letter-spacing:0.50px;">Created At 14/07/2022 12:48</div>
<div class="t" id="t60" style="left:1704.0px;top:1669.8px;font-size:41.57px;line-height:41.57px;color:#56646b;font-weight:700;letter-spacing:-0.67px;">Charles</div>
<div class="t" id="t61" style="left:1704.0px;top:1728.8px;font-size:41.13px;line-height:41.13px;color:#4f5d64;letter-spacing:-0.27px;">Sparkle Cleaning</div>
<div class="t" id="t62" style="left:1705.0px;top:1789.0px;font-size:37.79px;line-height:37.79px;color:#6b7a84;letter-spacing:-0.65px;">Washington D.C., DC, USA</div>
<div class="t" id="t63" style="left:1702.0px;top:1844.0px;font-size:37.79px;line-height:37.79px;color:#6b7a84;letter-spacing:0.25px;">Los Angeles</div>
<div class="t" id="t64" style="left:2699.4px;top:1653.3px;font-size:42.88px;line-height:42.88px;color:#56646b;letter-spacing:-1.15px;">John Mc Keever</div>
<div class="t" id="t65" style="left:2699.4px;top:1710.2px;font-size:42.88px;line-height:42.88px;color:#6b7a84;letter-spacing:-1.06px;">Alpha Team</div>
<div class="t" id="t66" style="left:3245.0px;top:1668.7px;font-size:42.88px;line-height:42.88px;color:#56646b;letter-spacing:-0.67px;">Service</div>
<div class="t" id="t67" style="left:3617.0px;top:1676.3px;font-size:34.88px;line-height:34.88px;color:#ffffff;font-weight:700;transform:scaleX(0.9922);transform-origin:0 0;">Completed!</div>
<div class="t" id="t68" style="left:4012.0px;top:1676.9px;font-size:34.59px;line-height:34.59px;color:#ffffff;font-weight:700;transform:scaleX(0.9804);transform-origin:0 0;">HIGH</div>
<div class="t" id="t69" style="left:479.0px;top:2034.7px;font-size:42.88px;line-height:42.88px;color:#56646b;letter-spacing:-1.33px;">A123458</div>
<div class="t" id="t70" style="left:479.0px;top:2090.7px;font-size:42.88px;line-height:42.88px;color:#56646b;">4</div>
<div class="t" id="t71" style="left:755.0px;top:2036.3px;font-size:43.31px;line-height:43.31px;color:#343c42;font-weight:700;letter-spacing:-0.07px;">Yard maintenance</div>
<div class="t" id="t72" style="left:753.0px;top:2110.0px;font-size:37.79px;line-height:37.79px;color:#2f7bbf;letter-spacing:1.20px;">19/07/2022 09:00</div>
<div class="t" id="t73" style="left:1109.0px;top:2110.0px;font-size:37.79px;line-height:37.79px;color:#2f7bbf;letter-spacing:0.53px;">19/07/2022 17:00</div>
<div class="t" id="t74" style="left:754.0px;top:2181.8px;font-size:37.50px;line-height:37.50px;color:#6c7a82;letter-spacing:0.50px;">Created At 17/07/2022 13:33</div>
<div class="t" id="t75" style="left:1703.0px;top:2035.8px;font-size:41.57px;line-height:41.57px;color:#56646b;font-weight:700;letter-spacing:-1.17px;">Richard</div>
<div class="t" id="t76" style="left:1704.0px;top:2094.8px;font-size:41.13px;line-height:41.13px;color:#4f5d64;letter-spacing:-0.27px;">Sparkle Cleaning</div>
<div class="t" id="t77" style="left:1704.0px;top:2155.0px;font-size:37.79px;line-height:37.79px;color:#6b7a84;letter-spacing:0.00px;">2A, 2nd Avenue, Tower Park</div>
<div class="t" id="t78" style="left:1704.0px;top:2210.0px;font-size:37.79px;line-height:37.79px;color:#6b7a84;letter-spacing:-0.04px;">Seattle 98112</div>
<div class="t" id="t79" style="left:2698.4px;top:2019.3px;font-size:42.88px;line-height:42.88px;color:#56646b;letter-spacing:-1.20px;">Shawn Edward</div>
<div class="t" id="t80" style="left:2699.4px;top:2076.2px;font-size:42.88px;line-height:42.88px;color:#6b7a84;letter-spacing:-1.06px;">Alpha Team</div>
<div class="t" id="t81" style="left:2568.0px;top:2028.7px;font-size:88.66px;line-height:88.66px;color:#858585;transform:scaleX(0.8697);transform-origin:0 0;-webkit-text-stroke:2px #dfe3e6;">S</div>
<div class="t" id="t82" style="left:2699.4px;top:2201.5px;font-size:42.88px;line-height:42.88px;color:#56646b;letter-spacing:-1.15px;">John Mc Keever</div>
<div class="t" id="t83" style="left:2699.4px;top:2258.4px;font-size:42.88px;line-height:42.88px;color:#6b7a84;letter-spacing:-1.06px;">Alpha Team</div>
<div class="t" id="t84" style="left:2696.4px;top:2381.3px;font-size:42.88px;line-height:42.88px;color:#56646b;letter-spacing:-0.17px;">Robert J</div>
<div class="t" id="t85" style="left:2699.4px;top:2438.2px;font-size:42.88px;line-height:42.88px;color:#6b7a84;letter-spacing:-1.06px;">Alpha Team</div>
<div class="t" id="t86" style="left:2567.0px;top:2390.7px;font-size:88.66px;line-height:88.66px;color:#858585;transform:scaleX(0.8482);transform-origin:0 0;-webkit-text-stroke:2px #dfe3e6;">R</div>
<div class="t" id="t87" style="left:3245.0px;top:2034.7px;font-size:42.88px;line-height:42.88px;color:#56646b;letter-spacing:-0.67px;">Service</div>
<div class="t" id="t88" style="left:4012.0px;top:2042.9px;font-size:34.59px;line-height:34.59px;color:#ffffff;font-weight:700;transform:scaleX(0.9804);transform-origin:0 0;">HIGH</div>
<div class="t" id="t89" style="left:3491.0px;top:2397.0px;font-size:37.79px;line-height:37.79px;color:#111111;letter-spacing:-0.78px;z-index:8;">2 Job(s) schedule updated successfully</div>
</body></html>
